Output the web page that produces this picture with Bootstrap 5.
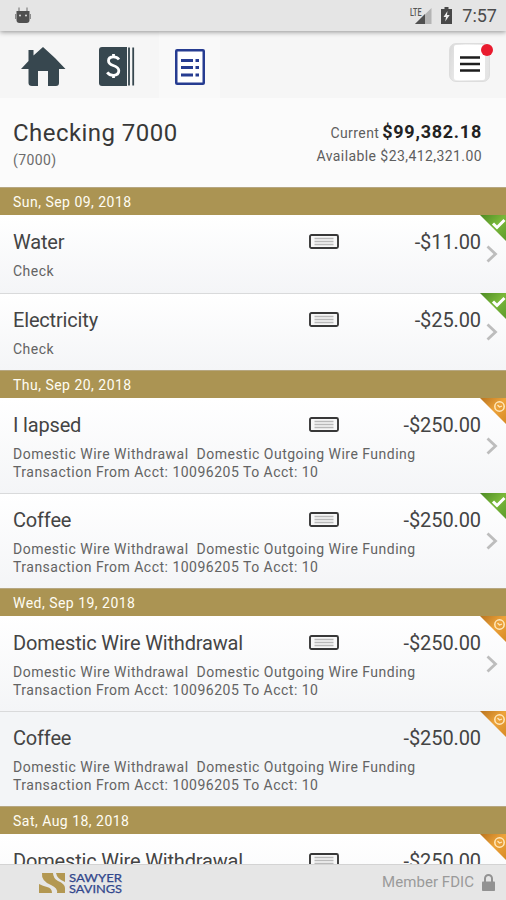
<!DOCTYPE html>
<html lang="en">
<head>
<meta charset="utf-8">
<meta name="viewport" content="width=device-width, initial-scale=1">
<title>Checking 7000</title>
<link href="https://cdn.jsdelivr.net/npm/bootstrap@5.3.0/dist/css/bootstrap.min.css" rel="stylesheet">
<style>
body{font-family:Roboto,"Liberation Sans",sans-serif;color:#444;height:900px;overflow:hidden;background:#f9f9f9}
svg{display:block;flex:none}
.status-bar{height:31px;background:#e5e5e5;color:#505050;padding:0 9px 0 14px;z-index:2;box-shadow:0 1px 5px rgba(0,0,0,.42)}
.clock{font-size:18px;line-height:31px;font-weight:400;color:#4c4c4c}
.tool-bar{height:67px;background:#f6f6f6}
.tool-home{margin-left:21px}
.tool-book{margin-left:33px}
.tool-list{width:61px;height:67px;margin-left:24px;background:#f9f9f9}
.menu-btn{width:41px;height:39px;margin:0 16px 5px 0;border-radius:7px;background:linear-gradient(100deg,#d8d8d8,#f1f1f1 35%,#e2e2e2);border:1px solid #ddd}
.menu-face{width:31px;height:35px;background:#fff;border-radius:2px}
.alert-dot{width:12px;height:12px;background:#e91b2e;top:0;right:-4px}
.account{height:89px;padding:21px 24px 0 13px;background:#fbfbfb}
.account-name{font-size:24px;line-height:29px;letter-spacing:.45px;color:#383838}
.account-no{font-size:14px;line-height:18px;margin-top:3px;letter-spacing:.4px;color:#6c6c6c}
.balance{font-size:14px;line-height:18px;color:#5e5e5e;letter-spacing:.42px;font-weight:400}
.balance strong{font-size:18px;color:#222;letter-spacing:.75px;margin-left:-1px}
.available{margin-top:5px}
.date-bar{height:28px;line-height:28px;padding-left:13px;font-size:14px;letter-spacing:.48px;background:#ab9453;color:#fffdf3;border-top:1px solid #b6a782}
.entry{height:95px;padding:15px 25px 0 13px;background:linear-gradient(#fff,#f4f5f7);border-top:1px solid #d9dadb}
.date-bar + .entry{border-top-color:#fff}
.entry-short{height:77.5px}
.entry-flat{background:#f3f5f7}
.entry-name,.amount{font-size:20px;line-height:23px;font-weight:400;letter-spacing:-.17px}
.amount{width:142px;letter-spacing:-.1px}
.cheque-icon{margin-top:-2px}
.details{font-size:14px;line-height:18px;margin-top:8px;letter-spacing:.49px;color:#636363;white-space:pre-line}
.corner{top:-1px;right:0}
.chevron{right:8px;top:29px}
.entry:not(.entry-short) .chevron{top:38px}
.entries{height:677px}
.bank-footer{height:36px;background:#e6e6e6;border-top:1px solid #d3d3d3;padding:0 11px 0 38px}
.fdic{font-size:15px;color:#9a9a9a;letter-spacing:.05px}
</style>
</head>
<body>
<svg width="0" height="0" class="position-absolute" aria-hidden="true">
<defs>
<linearGradient id="green" x1="0" y1="0" x2="1" y2="1"><stop offset="0" stop-color="#4c8a24"/><stop offset=".5" stop-color="#7ab83a"/><stop offset="1" stop-color="#5c9a2c"/></linearGradient>
<linearGradient id="amber" x1="0" y1="0" x2="1" y2="1"><stop offset="0" stop-color="#b9741f"/><stop offset=".5" stop-color="#eda33a"/><stop offset="1" stop-color="#d68a25"/></linearGradient>
</defs>
<symbol id="cheque" viewBox="0 0 30 15"><rect x="1" y="1" width="28" height="13" rx="1.500" fill="#f7f7f7" stroke="#383838" stroke-width="1.900"/><path d="M5.500 4.500h19M5.500 7.500h19M5.500 10.500h19" stroke="#b9b9b9" stroke-width="1.700"/></symbol>
<symbol id="arrow" viewBox="0 0 12 18"><path d="M1.500 1.500 9.500 9l-8 7.500" fill="none" stroke="#bdbdbd" stroke-width="2.800"/></symbol>
<symbol id="done" viewBox="0 0 26 26"><path d="M0 0h26v26z" fill="url(#green)"/><path d="m13 8.500 4 4L24.500 5" fill="none" stroke="#fff" stroke-width="3"/></symbol>
<symbol id="pending" viewBox="0 0 26 26"><path d="M0 0h26v26z" fill="url(#amber)"/><circle cx="19.500" cy="8.500" r="4.700" fill="none" stroke="#ffe9bd" stroke-width="1.500"/><path d="m17.500 7 2 2 2.500-1" fill="none" stroke="#ffe9bd" stroke-width="1.200"/></symbol>
</svg>

<div class="d-flex flex-column vh-100">
<div class="status-bar position-relative d-flex align-items-center justify-content-between flex-shrink-0">
  <svg width="18" height="18" viewBox="0 0 18 18"><path d="M5 .5v5M13 .5v5" stroke="#888" stroke-width="1.300"/><path d="M2.500 4h13v9q0 3-3 3h-7q-3 0-3-3z" fill="#505050"/><path d="M1.700 7v5M16.300 7v5" stroke="#777"/><circle cx="6" cy="8.500" r="1" fill="#ddd"/><circle cx="12" cy="8.500" r="1" fill="#ddd"/></svg>
  <div class="d-flex align-items-center">
    <svg width="23" height="18" viewBox="0 0 23 18"><path d="M22.500 1v16H6z" fill="#b4b4b4"/><path d="M16 7v10H6z" fill="#505050"/><text x="1" y="9" font-size="10" font-weight="500" fill="#555" textLength="11.500" lengthAdjust="spacingAndGlyphs">LTE</text></svg>
    <svg class="ms-2" width="14" height="18" viewBox="0 0 14 18"><path d="M4.500 0h4v2H12v15H1V2h3.500z" fill="#484848"/><path d="M7.500 4 3.500 10H6l-.8 4.500L9.700 8H7z" fill="#eee"/></svg>
    <span class="clock ms-2">7:57</span>
  </div>
</div>

<nav class="tool-bar d-flex align-items-center flex-shrink-0">
  <svg class="tool-home mt-1" width="45" height="40" viewBox="0 0 45 40"><path d="M22 0 34 11l10.500 11H38v14q0 3-3 3h-8V24H17v15h-6q-3.500 0-3.500-3V22H0L7.500 14V3h5v5.500z" fill="#37474f"/></svg>
  <svg class="tool-book mt-1" width="36" height="39" viewBox="0 0 36 39"><path d="M3 0h25v39H3q-3 0-3-3V3q0-3 3-3z" fill="#37474f"/><path d="M30 .5v38M34.200 .5v38" stroke="#37474f" stroke-width="1.800"/><path d="M20 12.500q-2-2.700-5.500-2.700-5 0-5 4 0 3.200 4.700 4.700 5.600 1.700 5.600 5.300 0 4.500-5.600 4.500-3.800 0-6-3M14.500 7v3m0 18v3" fill="none" stroke="#fff" stroke-width="2.800"/></svg>
  <div class="tool-list d-flex align-items-center">
    <svg class="ms-3 mt-1" width="30" height="36" viewBox="0 0 30 36"><rect x="1.250" y="1.250" width="27.500" height="33.500" rx=".8" fill="#fff" stroke="#263c91" stroke-width="2.500"/><path d="M6 11.500h12M6 18.500h12M6 26h12M20.500 11.500h3.500M20.500 18.500h3.500M20.500 26h3.500" stroke="#263c91" stroke-width="3.200"/></svg>
  </div>
  <div class="menu-btn position-relative ms-auto d-flex align-items-center justify-content-center">
    <div class="menu-face d-flex align-items-center justify-content-center"><svg class="mt-1" width="20" height="18" viewBox="0 0 20 18"><path d="M0 2.500h20M0 9h20M0 15.500h20" stroke="#1d1d1d" stroke-width="2.600"/></svg></div>
    <span class="alert-dot position-absolute rounded-circle"></span>
  </div>
</nav>

<header class="account d-flex justify-content-between flex-shrink-0">
  <div><div class="account-name">Checking 7000</div><div class="account-no">(7000)</div></div>
  <div class="balance text-end pt-1"><div>Current <strong>$99,382.18</strong></div><div class="available">Available $23,412,321.00</div></div>
</header>

<main class="entries overflow-hidden flex-shrink-0">
  <div class="date-bar">Sun, Sep 09, 2018</div>
  <article class="entry entry-short position-relative"><div class="d-flex align-items-center"><span class="entry-name me-auto">Water</span><svg class="cheque-icon" width="30" height="15"><use href="#cheque"/></svg><span class="amount text-end">-$11.00</span></div><div class="details">Check</div><svg class="corner position-absolute" width="26" height="26"><use href="#done"/></svg><svg class="chevron position-absolute" width="12" height="18"><use href="#arrow"/></svg></article>
  <article class="entry entry-short position-relative"><div class="d-flex align-items-center"><span class="entry-name me-auto">Electricity</span><svg class="cheque-icon" width="30" height="15"><use href="#cheque"/></svg><span class="amount text-end">-$25.00</span></div><div class="details">Check</div><svg class="corner position-absolute" width="26" height="26"><use href="#done"/></svg><svg class="chevron position-absolute" width="12" height="18"><use href="#arrow"/></svg></article>
  <div class="date-bar">Thu, Sep 20, 2018</div>
  <article class="entry position-relative"><div class="d-flex align-items-center"><span class="entry-name me-auto">I lapsed</span><svg class="cheque-icon" width="30" height="15"><use href="#cheque"/></svg><span class="amount text-end">-$250.00</span></div><div class="details">Domestic Wire Withdrawal&nbsp; Domestic Outgoing Wire Funding
Transaction From Acct: 10096205 To Acct: 10</div><svg class="corner position-absolute" width="26" height="26"><use href="#pending"/></svg><svg class="chevron position-absolute" width="12" height="18"><use href="#arrow"/></svg></article>
  <article class="entry position-relative"><div class="d-flex align-items-center"><span class="entry-name me-auto">Coffee</span><svg class="cheque-icon" width="30" height="15"><use href="#cheque"/></svg><span class="amount text-end">-$250.00</span></div><div class="details">Domestic Wire Withdrawal&nbsp; Domestic Outgoing Wire Funding
Transaction From Acct: 10096205 To Acct: 10</div><svg class="corner position-absolute" width="26" height="26"><use href="#done"/></svg><svg class="chevron position-absolute" width="12" height="18"><use href="#arrow"/></svg></article>
  <div class="date-bar">Wed, Sep 19, 2018</div>
  <article class="entry position-relative"><div class="d-flex align-items-center"><span class="entry-name me-auto">Domestic Wire Withdrawal</span><svg class="cheque-icon" width="30" height="15"><use href="#cheque"/></svg><span class="amount text-end">-$250.00</span></div><div class="details">Domestic Wire Withdrawal&nbsp; Domestic Outgoing Wire Funding
Transaction From Acct: 10096205 To Acct: 10</div><svg class="corner position-absolute" width="26" height="26"><use href="#pending"/></svg><svg class="chevron position-absolute" width="12" height="18"><use href="#arrow"/></svg></article>
  <article class="entry entry-flat position-relative"><div class="d-flex align-items-center"><span class="entry-name me-auto">Coffee</span><span class="amount text-end">-$250.00</span></div><div class="details">Domestic Wire Withdrawal&nbsp; Domestic Outgoing Wire Funding
Transaction From Acct: 10096205 To Acct: 10</div><svg class="corner position-absolute" width="26" height="26"><use href="#pending"/></svg></article>
  <div class="date-bar">Sat, Aug 18, 2018</div>
  <article class="entry position-relative"><div class="d-flex align-items-center"><span class="entry-name me-auto">Domestic Wire Withdrawal</span><svg class="cheque-icon" width="30" height="15"><use href="#cheque"/></svg><span class="amount text-end">-$250.00</span></div><svg class="corner position-absolute" width="26" height="26"><use href="#pending"/></svg></article>
</main>

<footer class="bank-footer d-flex align-items-center flex-shrink-0">
  <svg width="86" height="26" viewBox="0 0 86 26"><path d="M1 14q4 2 8 3 5 1 5 6H1zM4 3h11q0 5 5 8 7 3 7 7v5h-8q1-5-6-8Q3 11 4 3M18 3h9v9q-8-3-9-9" fill="#b39852"/><g font-family="Lato, sans-serif" font-size="12" fill="#32478c" stroke="#32478c" stroke-width=".25"><text x="31" y="12" textLength="53" lengthAdjust="spacingAndGlyphs">SAWYER</text><text x="31" y="23" textLength="53" lengthAdjust="spacingAndGlyphs">SAVINGS</text></g></svg>
  <span class="fdic ms-auto">Member FDIC</span>
  <svg class="ms-2" width="13" height="18" viewBox="0 0 13 18"><path d="M3 9V4.500a3.500 3.500 0 0 1 7 0V9" fill="none" stroke="#929292" stroke-width="2"/><rect y="7.500" width="13" height="9.500" rx=".8" fill="#929292"/></svg>
</footer>
</div>
<script src="https://cdn.jsdelivr.net/npm/bootstrap@5.3.0/dist/js/bootstrap.bundle.min.js"></script>
</body>
</html>
